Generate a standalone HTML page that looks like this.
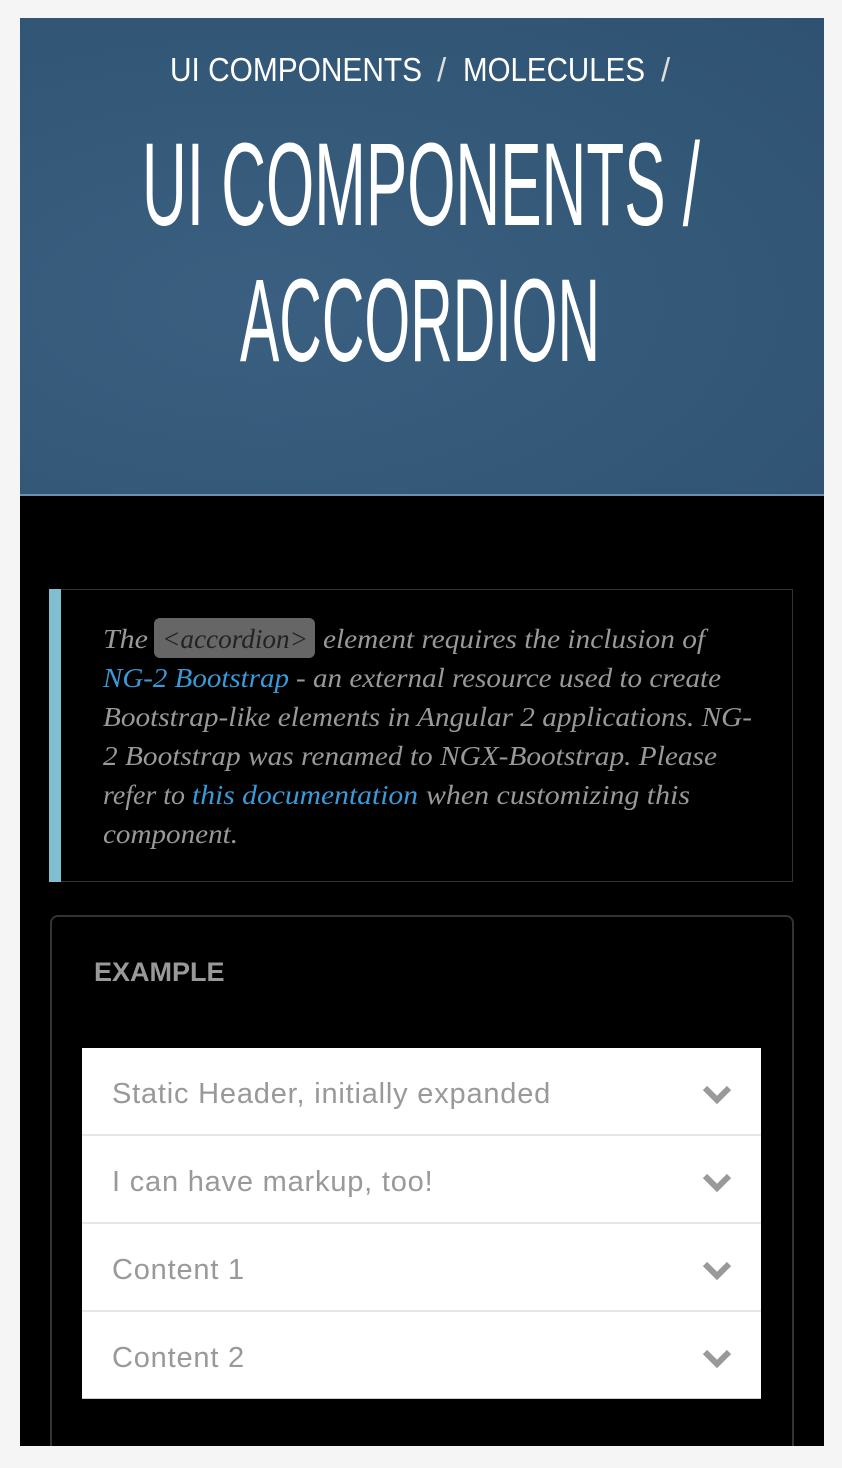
<!DOCTYPE html>
<html><head><meta charset="utf-8"><style>
html,body{margin:0;padding:0;background:#f5f5f5;width:842px;height:1468px;overflow:hidden;font-family:"Liberation Sans",sans-serif}
#wrap{position:absolute;left:20px;top:18px;width:804px;height:1428px;background:#000;overflow:hidden}
#hero{position:absolute;left:0;top:0;width:804px;height:476px;background:radial-gradient(ellipse at 30% 60%,#3b5f80 0%,#355a7a 40%,#2f5272 100%);border-bottom:2px solid #6f8fae}
svg{position:absolute;left:0;top:0}
.callout{position:absolute;left:29px;top:571px;width:744px;height:293px;border:1px solid #333;box-sizing:border-box}
.bar{position:absolute;left:29px;top:571px;width:12px;height:293px;background:#7fbfd0}
.card{position:absolute;left:30px;top:897px;width:744px;height:560px;border:2px solid #333;border-radius:8px;box-sizing:border-box}
.ex{position:absolute;left:74px;top:939px;font-weight:bold;font-size:27px;color:#999}
.acc{position:absolute;left:62px;top:1030px;width:679px;background:#fff}
.row{height:86px;border-bottom:2px solid #e6e6e6;position:relative;font-size:29px;color:#999;line-height:92px;padding-left:30px;letter-spacing:0.8px}
.row:last-child{border-bottom:1px solid #ccc}
.row svg{left:620px;top:36px;position:absolute}
</style></head><body>
<div id="wrap">
<div id="hero"></div>
<svg width="804" height="480">
<g fill="#fff" font-family="Liberation Sans, sans-serif">
<text x="150" y="63" font-size="33" textLength="252" lengthAdjust="spacingAndGlyphs">UI COMPONENTS</text>
<text x="417" y="63" font-size="33" fill="#ddd">/</text>
<text x="443" y="63" font-size="33" textLength="182" lengthAdjust="spacingAndGlyphs">MOLECULES</text>
<text x="641" y="63" font-size="33" fill="#ddd">/</text>
<text x="122" y="207" font-size="118" textLength="558" lengthAdjust="spacingAndGlyphs">UI COMPONENTS /</text>
<text x="220" y="343" font-size="118" textLength="360" lengthAdjust="spacingAndGlyphs">ACCORDION</text>
</g>
</svg>
<div class="callout"></div>
<div class="bar"></div>
<svg width="804" height="900">
<rect x="134" y="600" width="161" height="40" rx="6" fill="#666"/>
<g font-family="Liberation Serif, serif" font-style="italic" font-size="27" fill="#999">
<text x="83" y="630" textLength="45" lengthAdjust="spacingAndGlyphs">The</text>
<text x="142" y="630" fill="#222" textLength="146" lengthAdjust="spacingAndGlyphs">&lt;accordion&gt;</text>
<text x="303" y="630" textLength="382" lengthAdjust="spacingAndGlyphs">element requires the inclusion of</text>
<text x="83" y="669" fill="#3a9ad9" textLength="186" lengthAdjust="spacingAndGlyphs">NG-2 Bootstrap</text>
<text x="276" y="669" textLength="425" lengthAdjust="spacingAndGlyphs">- an external resource used to create</text>
<text x="83" y="708" textLength="649" lengthAdjust="spacingAndGlyphs">Bootstrap-like elements in Angular 2 applications. NG-</text>
<text x="83" y="747" textLength="614" lengthAdjust="spacingAndGlyphs">2 Bootstrap was renamed to NGX-Bootstrap. Please</text>
<text x="83" y="786" textLength="82" lengthAdjust="spacingAndGlyphs">refer to</text>
<text x="172" y="786" fill="#3a9ad9" textLength="226" lengthAdjust="spacingAndGlyphs">this documentation</text>
<text x="406" y="786" textLength="264" lengthAdjust="spacingAndGlyphs">when customizing this</text>
<text x="83" y="825" textLength="135" lengthAdjust="spacingAndGlyphs">component.</text>
</g>
</svg>
<div class="card"></div>
<div class="ex">EXAMPLE</div>
<div class="acc">
<div class="row">Static Header, initially expanded<svg width="30" height="22" viewBox="0 0 30 22"><path d="M3 4 L15 16 L27 4" stroke="#999" stroke-width="6" fill="none"/></svg></div>
<div class="row">I can have markup, too!<svg width="30" height="22" viewBox="0 0 30 22"><path d="M3 4 L15 16 L27 4" stroke="#999" stroke-width="6" fill="none"/></svg></div>
<div class="row">Content 1<svg width="30" height="22" viewBox="0 0 30 22"><path d="M3 4 L15 16 L27 4" stroke="#999" stroke-width="6" fill="none"/></svg></div>
<div class="row">Content 2<svg width="30" height="22" viewBox="0 0 30 22"><path d="M3 4 L15 16 L27 4" stroke="#999" stroke-width="6" fill="none"/></svg></div>
</div>
</div>
</body></html>
